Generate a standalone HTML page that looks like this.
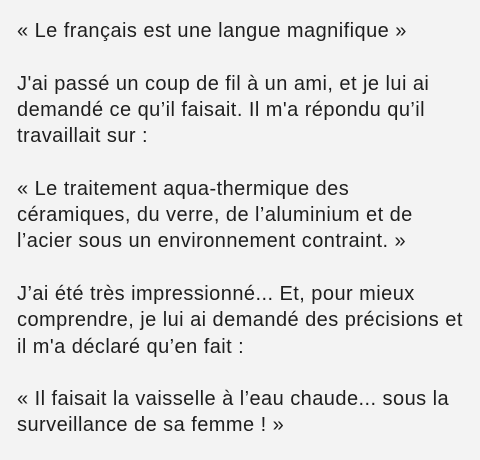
<!DOCTYPE html>
<html><head><meta charset="utf-8"><style>
html,body{margin:0;padding:0;background:#f3f3f3;width:480px;height:460px;overflow:hidden}
.t{position:absolute;left:17px;top:18px;font-family:"Liberation Sans",sans-serif;font-size:20px;letter-spacing:0.45px;line-height:26.3px;color:#1e1e1e;white-space:pre}
</style></head><body>
<div class="t">« Le français est une langue magnifique »

J'ai passé un coup de fil à un ami, et je lui ai
demandé ce qu’il faisait. Il m'a répondu qu’il
travaillait sur :

« Le traitement aqua-thermique des
céramiques, du verre, de l’aluminium et de
l’acier sous un environnement contraint. »

J’ai été très impressionné... Et, pour mieux
comprendre, je lui ai demandé des précisions et
il m'a déclaré qu’en fait :

« Il faisait la vaisselle à l’eau chaude... sous la
surveillance de sa femme ! »</div>
</body></html>
